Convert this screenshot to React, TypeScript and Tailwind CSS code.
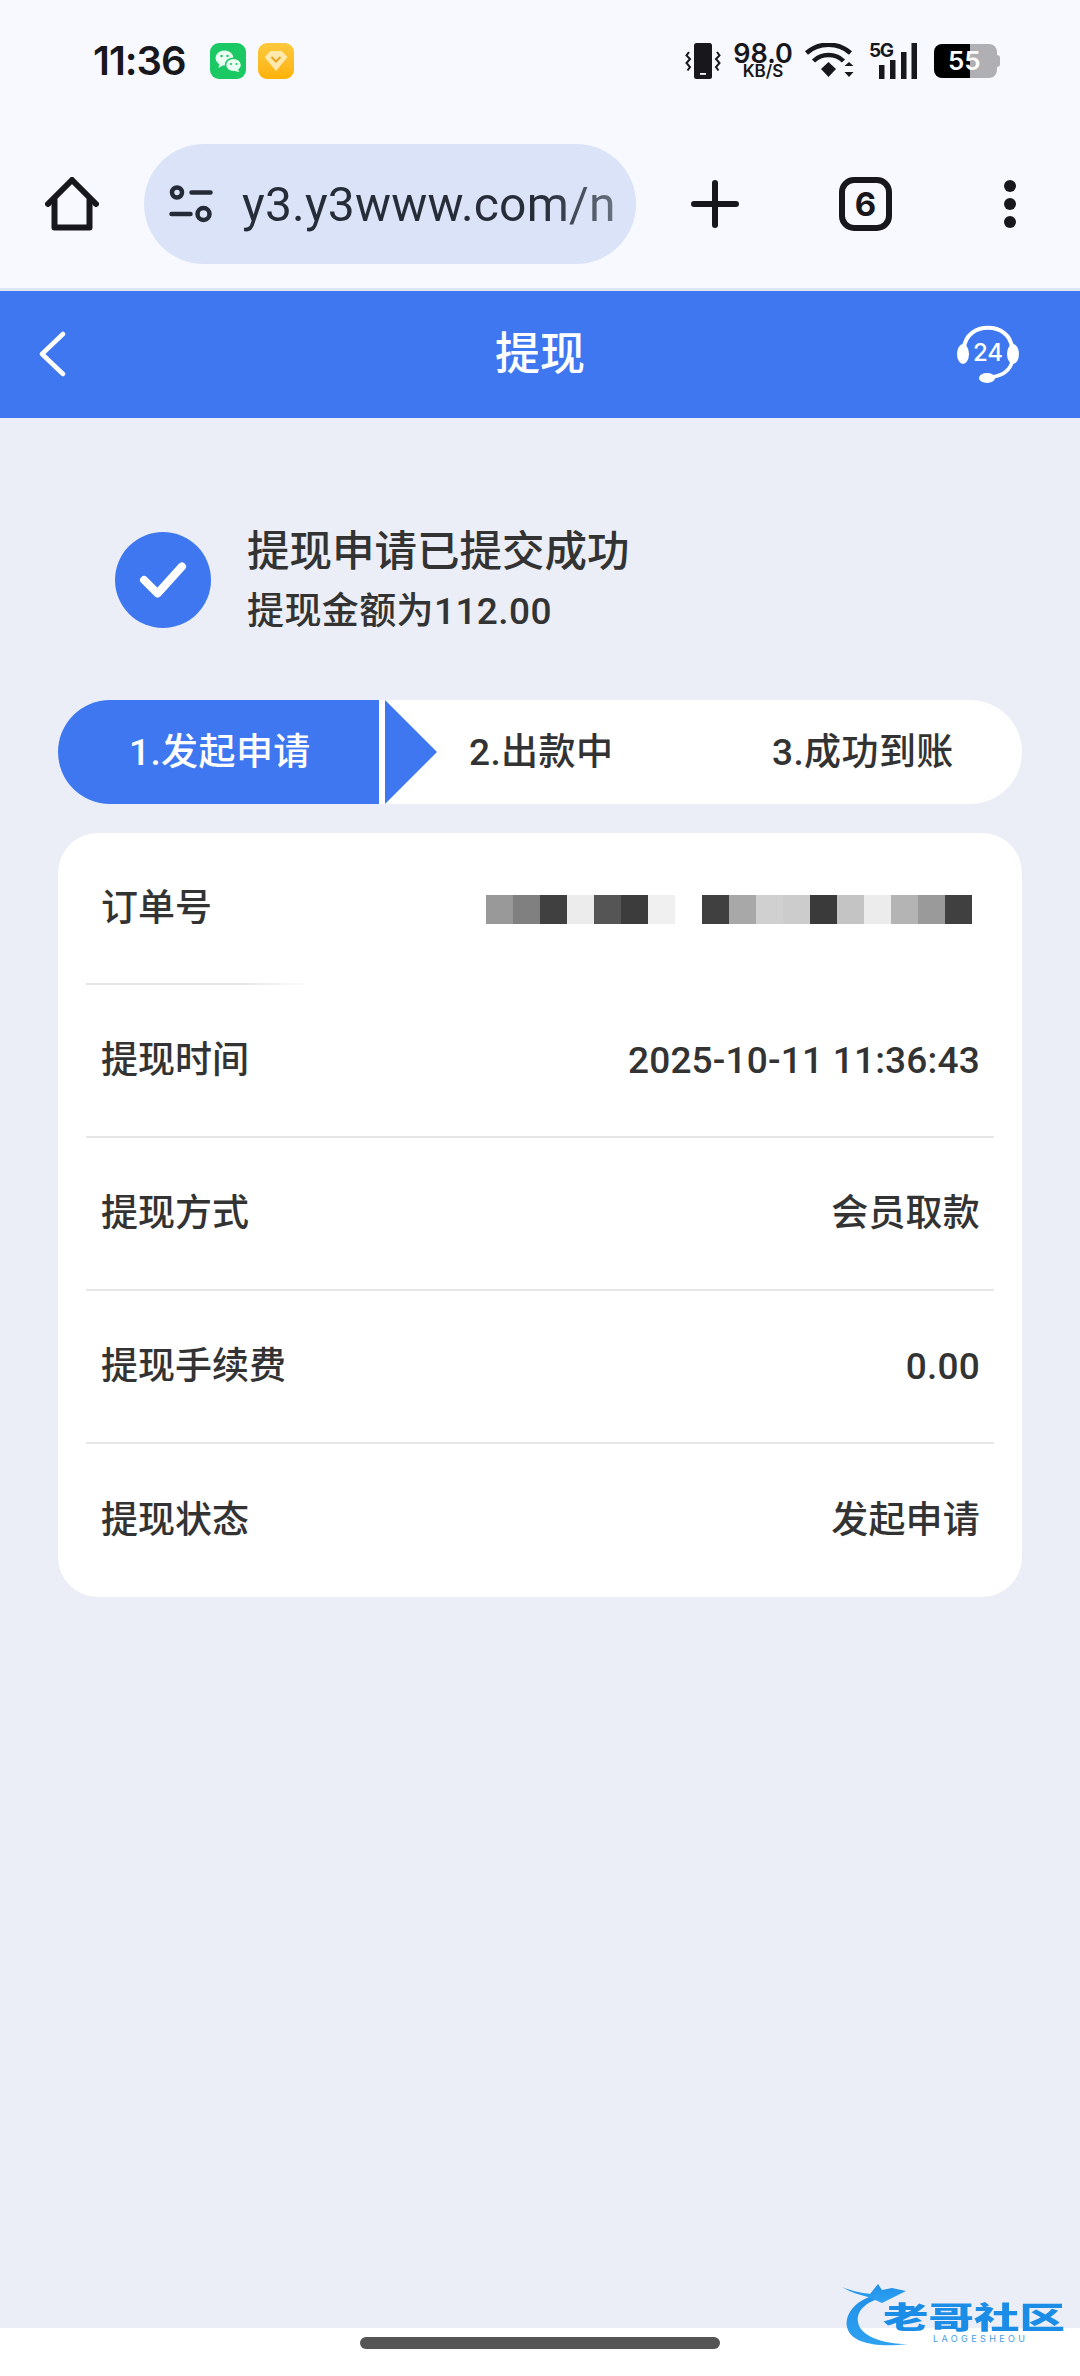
const inter = "font-['Inter','Noto_Sans_CJK_SC',sans-serif]"
const roboto = "font-['Roboto','Noto_Sans_CJK_SC',sans-serif]"

const rows = [
  { label: "提现时间", value: "2025-10-11 11:36:43" },
  { label: "提现方式", value: "会员取款" },
  { label: "提现手续费", value: "0.00" },
  { label: "提现状态", value: "发起申请" },
]

const blurBlocks = [
  "bg-[#999999]", "bg-[#808080]", "bg-[#404040]", "bg-[#ececec]", "bg-[#555555]", "bg-[#3c3c3c]", "bg-[#f0f0f0]", "bg-white",
  "bg-[#404040]", "bg-[#a8a8a8]", "bg-[#d0d0d0]", "bg-[#cccccc]", "bg-[#3a3a3a]", "bg-[#c4c4c4]", "bg-[#ececec]", "bg-[#b4b4b4]", "bg-[#9a9a9a]", "bg-[#404040]",
]

const StatusBar = () => (
  <div className={`flex h-[80px] items-center justify-between pl-[93px] pr-[80px] text-[#17171c] ${inter}`}>
    <div className="flex items-center">
      <span className="w-[117px] text-[40px] leading-none font-semibold tracking-[-1px]">11:36</span>
      <div className="flex h-[36px] w-[36px] items-center justify-center rounded-[9px] bg-[#1bc964]">
        <svg viewBox="0 0 35 36" className="h-[36px] w-[36px]">
          <ellipse cx="14" cy="15" rx="9" ry="7.5" fill="#eafff2" />
          <path d="M9 20l-1 5 5-3z" fill="#eafff2" />
          <ellipse cx="23" cy="22" rx="8" ry="6.8" fill="#eafff2" stroke="#1bc964" strokeWidth="1.5" />
          <path d="M27 26l2 3-5-1z" fill="#eafff2" />
          <circle cx="11" cy="13" r="1.2" fill="#1bc964" />
          <circle cx="17" cy="13" r="1.2" fill="#1bc964" />
          <circle cx="20.5" cy="21" r="1.1" fill="#1bc964" />
          <circle cx="26" cy="21" r="1.1" fill="#1bc964" />
        </svg>
      </div>
      <div className="ml-[12px] flex h-[36px] w-[36px] items-center justify-center rounded-[9px] bg-gradient-to-b from-[#fdc93a] to-[#fdb204]">
        <svg viewBox="0 0 35 36" className="h-[36px] w-[36px]">
          <path d="M6 14l6-6h11l6 6-11.500 14z" fill="#ffe9ad" />
          <path d="M13 14l4.500 4.500L22 14" fill="none" stroke="#e9a21a" strokeWidth="2" />
        </svg>
      </div>
    </div>
    <div className="flex items-center">
      <svg viewBox="0 0 36 36" className="h-[36px] w-[36px]">
        <rect x="9" y="0" width="18" height="36" rx="2.500" fill="#17171c" />
        <rect x="15" y="30" width="6" height="1.800" fill="#fff" />
        <path d="M4 8l-2.500 3.500L5 15l-3.500 4L5 23l-2.500 3.500" transform="translate(0,1)" fill="none" stroke="#17171c" strokeWidth="2" />
        <path d="M32 8l2.500 3.500L31 15l3.500 4L31 23l2.500 3.500" transform="translate(0,1)" fill="none" stroke="#17171c" strokeWidth="2" />
      </svg>
      <div className="ml-[13px] flex w-[58px] flex-col items-center font-semibold">
        <span className="h-[21px] text-[27px] leading-[21px] whitespace-nowrap">98.0</span>
        <span className="h-[15px] text-[17px] leading-[15px] whitespace-nowrap">KB/S</span>
      </div>
      <svg viewBox="0 0 50 36" className="ml-[12px] h-[36px] w-[51px]">
        <path d="M2 10C14 -1 34 -1 46 10" fill="none" stroke="#17171c" strokeWidth="4.500" />
        <path d="M9 18C17 10 31 10 39 18" fill="none" stroke="#17171c" strokeWidth="4.500" />
        <path d="M16.500 26L24 19l7.500 7L24 34z" fill="#17171c" />
        <path d="M40 22l4.500-4 4.500 4zM40 28l4.500 5 4.500-5z" fill="#17171c" transform="translate(0,1)" />
      </svg>
      <div className="relative ml-[14px] h-[36px] w-[48px]">
        <span className="absolute left-0 -top-[1px] text-[19px] leading-[18px] font-bold tracking-[-1.5px]">5G</span>
        <svg viewBox="0 0 48 36" className="h-[36px] w-[48px]">
          <rect x="10" y="22" width="5.500" height="14" fill="#17171c" />
          <rect x="21" y="17" width="5.500" height="19" fill="#17171c" />
          <rect x="32" y="9" width="5.500" height="27" fill="#17171c" />
          <rect x="42.500" y="0" width="5.500" height="36" fill="#17171c" />
        </svg>
      </div>
      <div className="relative ml-[17px] flex h-[34px] w-[66px] items-center">
        <div className="h-full w-[36px] rounded-l-[8px] bg-black" />
        <div className="h-full w-[27px] rounded-r-[8px] bg-[#b0afb3]" />
        <div className="h-[12px] w-[3px] rounded-r-[3px] bg-[#b0afb3]" />
        <span className="absolute left-[14px] top-[4px] text-[26px] leading-[26px] font-semibold text-white">55</span>
      </div>
    </div>
  </div>
)

const Toolbar = () => (
  <div className="flex h-[120px] items-center pl-[45px]">
    <svg viewBox="0 0 54 54" className="h-[54px] w-[54px]" fill="none" stroke="#17171c" strokeWidth="6" strokeLinecap="round" strokeLinejoin="round">
      <path d="M3 27L27 3l24 24" />
      <path d="M9.500 23v27.500h35V23" />
    </svg>
    <div className="ml-[45px] flex h-[120px] w-[492px] shrink-0 items-center rounded-[60px] bg-[#dae3f7] pl-[25px]">
      <svg viewBox="0 0 44 38" className="h-[38px] w-[45px] shrink-0" fill="none" stroke="#242a36" strokeWidth="4.500" strokeLinecap="round">
        <circle cx="7.500" cy="7.500" r="5" />
        <path d="M22 7.500h19M2 29h19" />
        <circle cx="34" cy="29" r="6" />
      </svg>
      <div className="ml-[28px] mt-[2px] w-[374px] overflow-hidden">
        <span className="bg-gradient-to-r from-[#262c38] from-80% to-[#6b7280] bg-clip-text text-[48px] leading-[56px] whitespace-nowrap text-transparent font-['Roboto',sans-serif] tracking-[0.2px]">y3.y3www.com/n</span>
      </div>
    </div>
    <svg viewBox="0 0 48 48" className="ml-[55px] h-[48px] w-[48px]" stroke="#17171c" strokeWidth="6" strokeLinecap="round">
      <path d="M3 24h42M24 3v42" />
    </svg>
    <div className={`ml-[100px] flex h-[54px] w-[53px] items-center justify-center rounded-[15px] border-[6px] border-[#17171c] text-[33px] leading-none font-bold text-[#17171c] ${inter}`}>6</div>
    <div className="ml-[112px] flex flex-col gap-[6px]">
      <div className="h-[12px] w-[12px] rounded-full bg-[#17171c]" />
      <div className="h-[12px] w-[12px] rounded-full bg-[#17171c]" />
      <div className="h-[12px] w-[12px] rounded-full bg-[#17171c]" />
    </div>
  </div>
)

const Header = () => (
  <div className={`grid h-[127px] grid-cols-3 items-center bg-[#3e77f0] pl-[38px] pr-[61px] text-white ${inter}`}>
    <svg viewBox="0 0 28 46" className="-mt-[2px] h-[46px] w-[28px]" fill="none" stroke="#fff" strokeWidth="4.500" strokeLinecap="round" strokeLinejoin="round">
      <path d="M25 3L4 23l21 20" />
    </svg>
    <span className="ml-[23px] -mt-[2px] justify-self-center text-[45px] leading-none font-medium whitespace-nowrap">提现</span>
    <div className="relative -mt-[2px] h-[60px] w-[62px] justify-self-end">
      <svg viewBox="0 0 62 60" className="h-[60px] w-[62px]" fill="none" stroke="#fff" strokeLinecap="round">
        <path d="M7 24C9 -3 53 -3 55 24" strokeWidth="4" />
        <ellipse cx="6" cy="30" rx="6" ry="10" fill="#fff" stroke="none" />
        <ellipse cx="56" cy="30" rx="6" ry="10" fill="#fff" stroke="none" />
        <path d="M55 38C53 46 46 51 36 53" strokeWidth="3.500" />
        <ellipse cx="30" cy="54" rx="8" ry="5" fill="#fff" stroke="none" />
      </svg>
      <span className="absolute inset-x-0 top-[17px] text-center text-[24px] leading-none font-medium">24</span>
    </div>
  </div>
)

const Steps = () => (
  <div className="relative mt-[67px] flex h-[104px] items-center overflow-hidden rounded-[52px] bg-white text-[37px] font-medium tracking-[0.4px] text-[#333333]">
    <div className="flex h-full w-[321px] items-center bg-[#3e77f0] pl-[71px] pt-[2px] text-white">1.发起申请</div>
    <svg viewBox="0 0 52 104" className="ml-[6px] h-[104px] w-[52px] shrink-0">
      <path d="M0 0l52 52L0 104z" fill="#3e77f0" />
    </svg>
    <span className="ml-[32px] w-[303px] pt-[2px]">2.出款中</span>
    <span className="pt-[2px]">3.成功到账</span>
  </div>
)

export default function App() {
  return (
    <div className={`relative flex h-[2376px] w-[1080px] flex-col overflow-hidden bg-[#ebeef6] ${roboto}`}>
      <div className="h-[291px] border-b-[3px] border-[#dfe5f3] bg-[#f8f9fe] pt-[21px]">
        <StatusBar />
        <div className="mt-[43px]"><Toolbar /></div>
      </div>
      <Header />

      <div className="flex-1 px-[58px]">
        <div className="mt-[113px] flex items-center pl-[57px]">
          <div className="-mt-[4px] flex h-[96px] w-[96px] items-center justify-center rounded-full bg-[#3e77f0]">
            <svg viewBox="0 0 52 40" className="h-[36px] w-[48px]" fill="none" stroke="#fff" strokeWidth="9" strokeLinecap="round" strokeLinejoin="round">
              <path d="M5 20l15 15L47 5" />
            </svg>
          </div>
          <div className="ml-[36px] -mt-[3px] font-medium text-[#333333]">
            <div className="text-[42.500px] leading-[48px]">提现申请已提交成功</div>
            <div className="mt-[15px] text-[37px] leading-[42px] tracking-[0.4px]">提现金额为112.00</div>
          </div>
        </div>

        <Steps />

        <div className="mt-[29px] rounded-[40px] bg-white px-[28px] text-[37px] font-medium text-[#333333]">
          <div className="relative flex h-[152px] items-center justify-between pl-[15px]">
            <span>订单号</span>
            <div className="mr-[22px] flex h-[29px]">
              {blurBlocks.map((c, i) => (
                <div key={i} className={`h-full w-[27px] ${c}`} />
              ))}
            </div>
            <div className="absolute bottom-0 left-0 h-[2px] w-[224px] bg-gradient-to-r from-[#e6e6e6] from-70% to-white" />
          </div>
          {rows.map((r, i) => (
            <div key={r.label} className={`flex h-[153px] items-center justify-between pl-[15px] pr-[14px] ${i < rows.length - 1 ? "border-b-2 border-[#e6e6e6]" : ""}`}>
              <span>{r.label}</span>
              <span className="tracking-[0.2px]">{r.value}</span>
            </div>
          ))}
        </div>
      </div>

      <div className="flex h-[48px] justify-center bg-white pt-[9px]">
        <div className="h-[12px] w-[360px] rounded-full bg-[#555555]" />
      </div>

      <div className={`absolute left-[842px] top-[2282px] h-[68px] w-[225px] ${inter}`}>
        <svg viewBox="0 0 90 68" className="absolute left-0 top-0 h-[68px] w-[90px]">
          <defs>
            <linearGradient id="logoBlue" x1="0" y1="0" x2="0" y2="1">
              <stop offset="0" stopColor="#1f8fe8" />
              <stop offset="1" stopColor="#2fa2f2" />
            </linearGradient>
          </defs>
          <path d="M42 12C14 14 0 34 6 48c5 12 26 18 60 14C40 62 18 54 16 40 14 28 26 18 44 15z" fill="url(#logoBlue)" />
          <path d="M0 5c12 5 22 6 28 7l8-10 4 6 10-2 14 3-16 8-8 4-14-6C18 13 8 10 0 5z" fill="url(#logoBlue)" />
        </svg>
        <span className="absolute left-[41px] top-[21px] origin-top scale-y-[0.66] text-[45.500px] leading-[44px] font-black whitespace-nowrap text-[#1c8de6]">老哥社区</span>
        <span className="absolute left-[91px] top-[52px] text-[9px] leading-[10px] tracking-[3.4px] whitespace-nowrap text-[#3f9de6]">LAOGESHEOU</span>
      </div>
    </div>
  )
}
